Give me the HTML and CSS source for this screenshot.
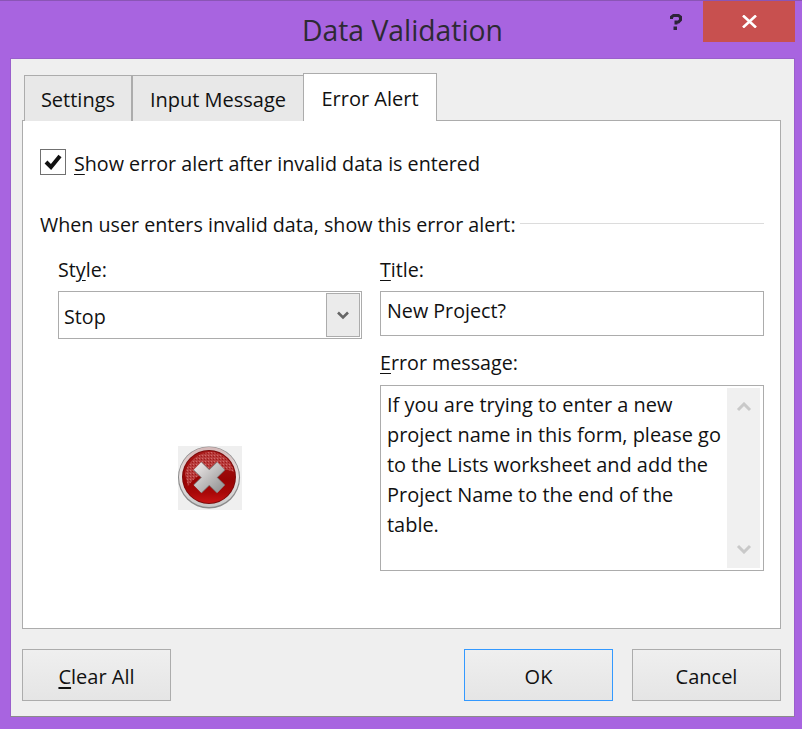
FILE: index.html
```html
<!DOCTYPE html>
<html lang="en">
<head>
<meta charset="utf-8">
<title>Data Validation</title>
<link rel="stylesheet" href="styles.css">
</head>
<body>
<div class="window">
  <header class="titlebar">
    <h1 class="title">Data Validation</h1>
    <svg class="help" width="12" height="16" viewBox="0 0 12 16"><path d="M1.5 5V3L3.500 1.500H8.500L10.500 3V6L8.500 8H6V10.500" fill="none" stroke="#2c2438" stroke-width="3"/><rect x="3.500" y="12.500" width="3.500" height="3.500" fill="#2c2438"/></svg>
    <div class="close"><svg width="15" height="13" viewBox="0 0 15 13"><path d="M1 0.500L14 12.500M14 0.500L1 12.500" stroke="#fff" stroke-width="2.600" fill="none"/></svg></div>
  </header>
  <main class="client">
    <nav class="tabs">
      <div class="tab tab-settings">Settings</div>
      <div class="tab tab-input">Input Message</div>
      <div class="tab tab-active">Error Alert</div>
    </nav>
    <section class="panel">
      <div class="check-row">
        <span class="checkbox"><svg width="20" height="18" viewBox="0 0 20 18"><path d="M3 9L8 14L17 3" fill="none" stroke="#111" stroke-width="4"/></svg></span>
        <span class="check-text"><span class="key">S</span>how error alert after invalid data is entered</span>
      </div>
      <div class="legend"><span>When user enters invalid data, show this error alert:</span><i class="rule"></i></div>
      <div class="columns">
        <div class="col-left">
          <div class="label">St<span class="key">y</span>le:</div>
          <div class="select">
            <span class="select-value">Stop</span>
            <span class="select-btn"><svg width="12" height="9" viewBox="0 0 12 9"><path d="M1 1.500L6 6.500L11 1.500" fill="none" stroke="#666" stroke-width="2.600"/></svg></span>
          </div>
          <div class="icon-box">
            <svg width="64" height="64" viewBox="0 0 64 64">
              <defs>
                <linearGradient id="red" x1="0" y1="0" x2="0" y2="1"><stop offset="0" stop-color="#a81818"/><stop offset="0.550" stop-color="#980404"/><stop offset="0.800" stop-color="#a80808"/><stop offset="1" stop-color="#c81414"/></linearGradient>
                <linearGradient id="ring" x1="0" y1="0" x2="0" y2="1"><stop offset="0" stop-color="#d4b8b8"/><stop offset="0.500" stop-color="#e8e2e2"/><stop offset="1" stop-color="#c8c8c8"/></linearGradient>
                <linearGradient id="cross" x1="0" y1="0" x2="1" y2="1"><stop offset="0" stop-color="#e6e2e2"/><stop offset="1" stop-color="#989898"/></linearGradient>
                <pattern id="speckle" width="3" height="3" patternUnits="userSpaceOnUse"><rect width="3" height="3" fill="#b83c3c"/><rect width="1" height="1" fill="#d06a6a"/><rect x="2" y="1" width="1" height="1" fill="#a01818"/></pattern>
              </defs>
              <rect width="64" height="64" fill="#efefef"/>
              <circle cx="31" cy="31.500" r="31" fill="#8a8a8a"/>
              <circle cx="31" cy="31" r="30" fill="url(#ring)"/>
              <circle cx="31" cy="31" r="27" fill="#7a0a0a"/>
              <circle cx="31" cy="31" r="26" fill="url(#red)"/>
              <path d="M7 28C10 14 22 6 34 6C46 7 54 16 56 26C42 20 22 24 10 40Z" fill="url(#speckle)"/>
              <path d="M19.500 20L43 43M43 20L19.500 43" stroke="#7c6c6c" stroke-width="12" fill="none"/>
              <path d="M19.500 20L43 43M43 20L19.500 43" stroke="url(#cross)" stroke-width="10.500" fill="none"/>
            </svg>
          </div>
        </div>
        <div class="col-right">
          <div class="label"><span class="key">T</span>itle:</div>
          <div class="input">New Project?</div>
          <div class="label label-error"><span class="key">E</span>rror message:</div>
          <div class="textarea">
            <p class="message">If you are trying to enter a new project name in this form, please go to the Lists worksheet and add the Project Name to the end of the table.</p>
            <div class="scrollbar">
              <svg width="16" height="10" viewBox="0 0 16 10"><path d="M2 8L8 2L14 8" fill="none" stroke="#c9c9c9" stroke-width="3"/></svg>
              <svg width="16" height="10" viewBox="0 0 16 10"><path d="M2 2L8 8L14 2" fill="none" stroke="#c9c9c9" stroke-width="3"/></svg>
            </div>
          </div>
        </div>
      </div>
    </section>
    <footer class="actions">
      <div class="btn"><span><span class="key">C</span>lear All</span></div>
      <div class="right-actions">
        <div class="btn btn-default">OK</div>
        <div class="btn">Cancel</div>
      </div>
    </footer>
  </main>
</div>
</body>
</html>
```
FILE: styles.css
```css
* { box-sizing: border-box; }
html, body { margin: 0; padding: 0; }
body {
  width: 802px;
  height: 729px;
  overflow: hidden;
  background: #a864e0;
  font-family: "Open Sans", "Noto Sans", sans-serif;
  font-size: 19.7px;
  color: #111;
}
.window {
  width: 802px;
  height: 729px;
  border-top: 1px solid #8a55b5;
  padding: 0 7px 12px 10px;
  display: flex;
  flex-direction: column;
}
.titlebar {
  height: 57px;
  flex: none;
  position: relative;
  display: flex;
  justify-content: center;
}
.title {
  margin: 12px 0 0;
  font-size: 28.3px;
  line-height: 35px;
  font-weight: 400;
  color: #2d2a33;
}
.help { position: absolute; left: 660px; top: 13px; }
.close {
  position: absolute;
  left: 693px;
  top: 0;
  width: 92px;
  height: 41px;
  background: #c8504f;
  display: flex;
  align-items: center;
  justify-content: center;
}
.client {
  flex: 1;
  background: #efefef;
  border: 1px solid #9a5fcc;
  border-bottom-color: #8b8b8b;
  padding: 14px 13px 15px 11px;
  display: flex;
  flex-direction: column;
  position: relative;
}
.tabs {
  display: flex;
  align-items: flex-end;
  height: 48px;
  padding-left: 2px;
  margin-bottom: -1px;
  position: relative;
  z-index: 1;
  font-size: 20px;
}
.tab {
  background: #e8e8e8;
  border: 1px solid #acacac;
  border-bottom: 0;
  height: 46px;
  display: flex;
  align-items: center;
  justify-content: center;
  padding-top: 2px;
}
.tab-settings { width: 108px; }
.tab-input { width: 172px; margin-left: 0; }
.tab-active {
  background: #fff;
  width: 134px;
  height: 48px;
  margin-left: -1px;
  padding-top: 1px;
}
.panel {
  height: 509px;
  background: #fff;
  border: 1px solid #acacac;
  padding: 26px 16px 0 17px;
}
.check-row { display: flex; align-items: center; height: 28px; gap: 8px; margin-top: 1px; }
.check-text { padding-top: 2px; }
.checkbox {
  width: 26px;
  height: 26px;
  border: 1px solid #707070;
  background: #fff;
  display: flex;
  align-items: center;
  justify-content: center;
}
.key { text-decoration: underline; text-underline-offset: 3px; }
.legend {
  display: flex;
  align-items: center;
  margin-top: 34px;
  height: 28px;
  gap: 4px;
}
.rule { flex: 1; height: 1px; background: #dcdcdc; margin-top: -1px; }
.columns { display: flex; gap: 18px; margin-top: 20px; }
.col-left { width: 304px; margin-left: 18px; }
.col-right { width: 384px; }
.label { height: 33px; line-height: 24px; }
.label-error { margin-top: 14px; height: 35px; line-height: 26px; }
.select {
  height: 48px;
  border: 1px solid #acacac;
  padding: 1px;
  display: flex;
  align-items: center;
  justify-content: space-between;
}
.select-value { padding: 2px 0 0 4px; }
.select-btn {
  width: 34px;
  height: 44px;
  background: #ebebeb;
  border: 1px solid #acacac;
  display: flex;
  align-items: center;
  justify-content: center;
}
.icon-box { display: flex; justify-content: center; margin-top: 107px; }
.input {
  height: 45px;
  border: 1px solid #acacac;
  padding: 3px 6px;
  line-height: 31px;
}
.textarea {
  height: 186px;
  border: 1px solid #acacac;
  padding: 2px 3px 2px 6px;
  display: flex;
  justify-content: space-between;
}
.message { margin: 2px 0 0; width: 336px; line-height: 30px; font-size: 19.95px; }
.scrollbar {
  width: 33px;
  background: #f0f0f0;
  display: flex;
  flex-direction: column;
  justify-content: space-between;
  align-items: center;
  padding: 14px 0;
}
.actions {
  display: flex;
  justify-content: space-between;
  margin-top: 20px;
  font-size: 20px;
}
.right-actions { display: flex; gap: 19px; }
.btn {
  width: 149px;
  height: 52px;
  padding-top: 2px;
  background: linear-gradient(#efefef, #e5e5e5);
  border: 1px solid #acacac;
  display: flex;
  align-items: center;
  justify-content: center;
}
.btn-default { border-color: #3399ff; }
```
